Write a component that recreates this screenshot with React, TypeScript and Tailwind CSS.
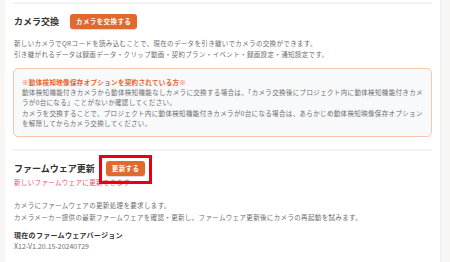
import React from 'react';

const font = { fontFamily: '"Noto Sans CJK JP", "Noto Sans", sans-serif' };

const Divider = () => <div className="h-[2px] bg-[#f3f3f3]" />;

const OrangeButton: React.FC<{ label: string }> = ({ label }) => (
    <button className="h-[15px] px-[6px] rounded-[3px] bg-[#e2692d] text-white text-[6.5px] tracking-[0.4px] font-bold leading-[15px] shadow-[0_1px_1px_rgba(0,0,0,0.15)]">
        {label}
    </button>
);

export default function App() {
    return (
        <div className="w-[450px] h-[262px] flex overflow-hidden bg-white text-[7px] leading-[10px]" style={font}>
            <div className="w-[5px] shrink-0 bg-[#f8f6f4]" />
            <main className="flex-1 px-[8px]">
                <div className="mt-[2px]"><Divider /></div>

                {/* camera exchange */}
                <section className="pl-[1px]">
                    <div className="mt-[10px] flex items-center gap-[11px]">
                        <h2 className="text-[9px] leading-[13px] font-bold text-[#333]">カメラ交換</h2>
                        <OrangeButton label="カメラを交換する" />
                    </div>
                    <div className="mt-[9px] text-[6.5px] leading-[11px] tracking-[0.35px] text-[#6e6e6e]">
                        <p>新しいカメラでQRコードを読み込むことで、現在のデータを引き継いでカメラの交換ができます。</p>
                        <p>引き継がれるデータは録画データ・クリップ動画・契約プラン・イベント・録画設定・通知設定です。</p>
                    </div>
                </section>
                <div className="mt-[8px] border border-[#f5c7ab] bg-[#f8f9fb] rounded-[5px] pl-[8px] pr-[6px] pt-[8px] pb-[8px] text-[6.5px] leading-[10.2px] tracking-[0.35px] text-[#6e6e6e]">
                    <p className="font-bold text-[#e8622c]">※動体検知映像保存オプションを契約されている方※</p>
                    <p>動体検知機能付きカメラから動体検知機能なしカメラに交換する場合は、「カメラ交換後にプロジェクト内に動体検知機能付きカメラが0台になる」ことがないか確認してください。</p>
                    <p>カメラを交換することで、プロジェクト内に動体検知機能付きカメラが0台になる場合は、あらかじめ動体検知映像保存オプションを解除してからカメラ交換してください。</p>
                </div>

                <div className="mt-[12px]"><Divider /></div>

                {/* firmware */}
                <section className="pl-[1px]">
                    <div className="mt-[10px] flex items-center gap-[11px]">
                        <h2 className="text-[9px] leading-[13px] font-bold text-[#333]">ファームウェア更新</h2>
                        <div className="relative flex">
                            <OrangeButton label="更新する" />
                            <div className="absolute left-[-7px] right-[-7px] top-[-6px] bottom-[-8px] border-[3px] border-[#e60012]" />
                        </div>
                    </div>
                    <p className="mt-[1px] text-[6.5px] leading-[10px] tracking-[0.35px] text-[#e9506a]">新しいファームウェアに更新できます</p>
                    <div className="mt-[13px] text-[6.5px] leading-[11.5px] tracking-[0.35px] text-[#6e6e6e]">
                        <p>カメラにファームウェアの更新処理を要求します。</p>
                        <p>カメラメーカー提供の最新ファームウェアを確認・更新し、ファームウェア更新後にカメラの再起動を試みます。</p>
                    </div>
                    <p className="mt-[7px] text-[7px] leading-[11px] tracking-[0.3px] font-bold text-[#333]">現在のファームウェアバージョン</p>
                    <p className="text-[7px] leading-[10px] text-[#6e6e6e]">X12-V1.20.15-20240729</p>
                </section>
            </main>
            <div className="w-[10px] shrink-0 bg-[#f8f6f4] border-l border-[#efebe7]" />
        </div>
    );
}
